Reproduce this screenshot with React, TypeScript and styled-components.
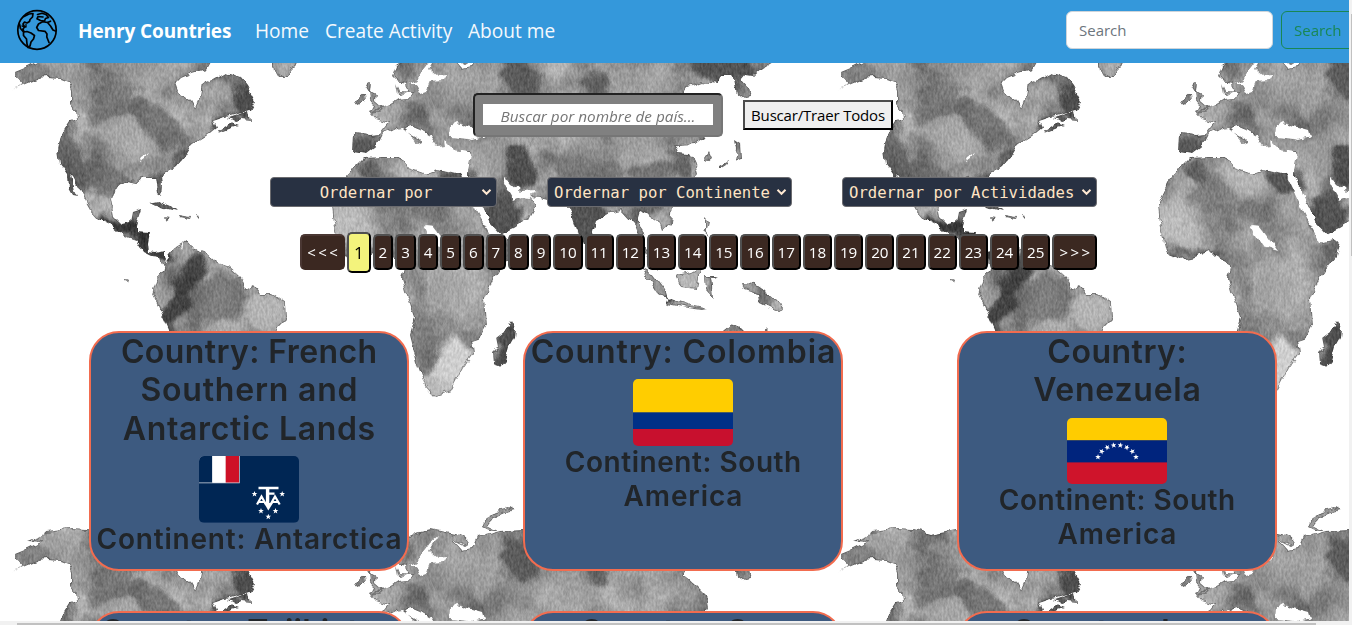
import React from "react";
import styled, { createGlobalStyle } from "styled-components";

const GlobalStyle = createGlobalStyle`
  *, *::before, *::after { box-sizing: border-box; }
  body { margin: 0; background: #fff; color: #212529; overflow: hidden;
    font-family: "Open Sans", "Noto Sans", sans-serif; font-size: 16px; }
`;

const Shell = styled.div`
  display: grid;
  grid-template-columns: 1349px 3px;
  grid-template-rows: 621px 4px;
  width: 1352px;
  height: 625px;
`;
const Viewport = styled.div`
  position: relative;
  overflow: hidden;
`;
const VTrack = styled.div`
  background: #f1f1f1;
  padding: 14px 0 0 2px;
`;
const VThumb = styled.div`
  height: 242px;
  background: #c1c1c1;
`;
const HTrack = styled.div`
  grid-column: 1 / 3;
  background: #f1f1f1;
  padding: 2px 0 0 17px;
`;
const HThumb = styled.div`
  width: 1299px;
  height: 2px;
  background: #c1c1c1;
`;
const MapLayer = styled.svg`
  position: absolute;
  inset: 0;
  display: block;
`;
const Page = styled.div`
  position: relative;
  display: flex;
  flex-direction: column;
`;

const Navbar = styled.nav`
  display: flex;
  align-items: center;
  height: 63px;
  padding: 0 0 3px 16px;
  background: #3498db;
  white-space: nowrap;
`;
const Brand = styled.a`
  width: 153px;
  margin: 2px 24px 0 20px;
  color: #fff;
  font-size: 19px;
  font-weight: 700;
  letter-spacing: -0.1px;
`;
const NavItem = styled.a<{ $w: number }>`
  width: ${(p) => p.$w}px;
  margin: 2px 16px 0 0;
  color: #f4f9fd;
  font-size: 19.1px;
`;
const NavForm = styled.form`
  display: flex;
  flex: none;
  gap: 8px;
  margin-left: auto;
  margin-right: -16px;
`;
const NavInput = styled.input`
  width: 207px;
  height: 38px;
  padding: 0 12px;
  border: 1px solid #ced4da;
  border-radius: 6px;
  background: #fff;
  font: 15px "Open Sans", sans-serif;
  &::placeholder { color: #6c757d; opacity: 1; }
`;
const NavButton = styled.button`
  width: 84px;
  height: 38px;
  padding: 0 0 0 12px;
  border: 1px solid #198754;
  border-radius: 6px;
  background: transparent;
  color: #198754;
  text-align: left;
  font: 15px "Open Sans", sans-serif;
`;

const SearchRow = styled.div`
  display: flex;
  align-items: center;
  gap: 20px;
  height: 44px;
  margin: 30px 0 0 473px;
`;
const SearchFrame = styled.div`
  width: 250px;
  height: 44px;
  padding: 9px 8px;
  border: 2px solid #767676;
  border-top-color: #222;
  border-left-color: #222;
  border-radius: 5px;
  background: #808080;
`;
const SearchInput = styled.input`
  display: block;
  width: 230px;
  height: 21px;
  padding: 2px 0 0;
  border: 0;
  background: #fff;
  text-align: center;
  font: italic 15.3px/19px "Open Sans", sans-serif;
  &::placeholder { color: #757575; opacity: 1; }
`;
const SearchButton = styled.button`
  width: 150px;
  height: 30px;
  padding: 0;
  border: 2px solid #000;
  border-top-color: #4c4c4c;
  border-left-color: #4c4c4c;
  background: #efefef;
  color: #000;
  white-space: nowrap;
  font: 15px "Open Sans", sans-serif;
  letter-spacing: -0.18px;
`;

const FilterRow = styled.div`
  display: flex;
  gap: 50px;
  margin: 40px 0 0 270px;
`;
const Filter = styled.button<{ $w: number; $center?: boolean }>`
  display: flex;
  align-items: center;
  width: ${(p) => p.$w}px;
  height: 30px;
  padding: 0 4px 0 ${(p) => (p.$center ? 0 : 6)}px;
  border: 1px solid #6b6b6f;
  border-radius: 4px;
  background: #283142;
  color: #ffe4c4;
  white-space: nowrap;
  font: 15.6px "DejaVu Sans Mono", monospace;
  span { flex: 1; padding-top: 1px; text-align: ${(p) => (p.$center ? "center" : "left")}; }
  svg { flex: none; }
`;

const Pager = styled.div`
  display: flex;
  align-items: flex-start;
  gap: 2px;
  height: 41px;
  margin: 25px 0 0 300px;
`;
const PageButton = styled.button<{ $w: number; $active?: boolean; $flat?: boolean }>`
  flex: none;
  width: ${(p) => p.$w}px;
  height: ${(p) => (p.$active ? 41 : 36)}px;
  margin-top: ${(p) => (p.$active ? 0 : 2)}px;
  padding: 0;
  border: 2px solid #000;
  border-color: ${(p) => (p.$flat ? "#4a3733 #3b2821 #3b2821 #4a3733" : "#505050 #000 #000 #505050")};
  border-radius: 5px;
  background: ${(p) => (p.$active ? "#f3f37c" : "#3b2821")};
  color: ${(p) => (p.$active ? "#000" : "#fff")};
  text-align: center;
  font: ${(p) => (p.$active ? 17 : 15.2)}px "Open Sans", sans-serif;
`;
const EndLabel = styled.span`
  font-size: 15px;
  letter-spacing: 2.4px;
  margin-right: -2.4px;
`;

const Cards = styled.div`
  display: grid;
  grid-template-columns: repeat(3, 320px);
  column-gap: 114px;
  row-gap: 40px;
  margin: 58px 0 0 89px;
`;
const CardBox = styled.article`
  height: 240px;
  border: 2px solid #f26c4f;
  border-radius: 30px;
  background: #3d5a80;
  text-align: center;
  white-space: nowrap;
  font-family: Inter, sans-serif;
`;
const CardTitle = styled.h1`
  margin: 0 0 8px;
  font-size: 32px;
  font-weight: 600;
  line-height: 38.4px;
`;
const CardText = styled.h2`
  margin: 0;
  font-size: 28px;
  font-weight: 600;
  line-height: 33.6px;
`;
const Line = styled.span<{ $ls: number }>`
  display: block;
  letter-spacing: ${(p) => p.$ls}px;
  margin-right: ${(p) => -p.$ls}px;
`;
const Flag = styled.svg`
  display: block;
  width: 100px;
  height: 66.6px;
  margin: 0 auto;
  border-radius: 5px;
`;

const STAR = "M0-3L.75-1H2.85L1.2.3 1.8 2.45 0 1.2-1.8 2.45-1.2.3-2.85-1H-.75Z";

function Globe() {
  return (
    <svg width="42" height="42" viewBox="0 0 42 42" fill="none" stroke="#000" strokeWidth="1.7" strokeLinejoin="round" strokeLinecap="round">
      <ellipse cx="21" cy="21" rx="19.2" ry="19.3" />
      <path d="M8 7.5 13 5 17 4.5 16.5 8 14 10.5 13.5 12.5 11 14 8.5 13 7 15 8.5 18 7 20 8 23 11 22.5 15 24 18.5 26.5 17.5 30 15 33 14 37 12 38.5 11 35 10.5 30 7.5 26.5 7.5 23 4.5 19.5 3.5 15" />
      <path d="M10 15.5V18L6 17" strokeWidth="1.3" />
      <path d="M21.5 5.5 26 4.2 30 5.5 32.5 8.5 29.5 9.5 28.5 12 24.5 11.5 21 9.8 22 7.5 27 8" />
      <path d="M34.5 12.2 31.5 13.5 26.5 12.7 22.5 15 20.7 18.5 22.5 21.5 29 22.3 31 25 30.8 28 33 33.5 M31.5 13.5 34.5 17 37 21 39.5 22" />
    </svg>
  );
}

const Chevron = () => (
  <svg width="11" height="8" viewBox="0 0 11 8" fill="none" stroke="#ffe9d2" strokeWidth="2">
    <path d="M1.5 1.8 5.5 5.8 9.5 1.8" />
  </svg>
);

function FrenchSouthernFlag() {
  return (
    <Flag viewBox="0 0 100 66.6">
      <rect width="100" height="66.6" fill="#002654" />
      <path d="M0 0H40.7V27.3H0Z" fill="#d9dde4" />
      <path d="M0 0H13.3V26.5H0Z" fill="#002654" />
      <path d="M13.3 0H26.7V26.5H13.3Z" fill="#fff" />
      <path d="M26.7 0H40V26.5H26.7Z" fill="#ce1126" />
      <g fill="none" stroke="#fff" strokeWidth="2">
        <path d="M59.5 32H79.5" strokeWidth="2.6" />
        <path d="M68.6 32V50" strokeWidth="3.4" />
        <path d="M70 37.6H75.5" strokeWidth="2.2" />
        <path d="M58 48.5 62.5 40.5 67 48.5M60 46H66M71.5 48.5 76 40.5 80.7 48.5M73 46H79" strokeWidth="2.2" />
      </g>
      <path d="M65 47H74L69.3 54.5Z" fill="#fff" />
      {[[55.5, 38], [83.2, 38], [62, 55], [76.5, 55], [69.3, 60.7]].map(([x, y]) => (
        <path key={x} d={STAR} transform={`translate(${x} ${y})`} fill="#fff" />
      ))}
    </Flag>
  );
}
function ColombiaFlag() {
  return (
    <Flag viewBox="0 0 100 66.6">
      <rect width="100" height="34" fill="#ffcd00" />
      <rect y="33.3" width="100" height="17" fill="#003087" />
      <rect y="50" width="100" height="17" fill="#c8102e" />
    </Flag>
  );
}
function VenezuelaFlag() {
  const stars = [[31, 39], [34.7, 33.5], [40.2, 29.4], [46.6, 27.3], [53.4, 27.3], [59.8, 29.4], [65.3, 33.5], [69, 39]];
  return (
    <Flag viewBox="0 0 100 66.6">
      <rect width="100" height="23" fill="#ffcc00" />
      <rect y="22.2" width="100" height="23" fill="#00247d" />
      <rect y="44.4" width="100" height="23" fill="#cf142b" />
      {stars.map(([x, y], i) => (
        <path key={i} d={STAR} transform={`translate(${x} ${y}) rotate(${(i - 3.5) * 20})`} fill="#fff" />
      ))}
    </Flag>
  );
}

const LANDS = [
  // North and Central America
  "M12 90 24 84 15 78 15 72 27 67 41 60 28 59 44 53 46 49 70 46 88 47 104 52 130 47 160 50 195 40 215 55 207 69 193 73 181 78 175 84 178 92 190 100 195 107 200 95 202 84 213 80 227 72 240 77 247 86 255 101 250 110 238 114 222 118 213 121 216 128 205 137 200 140 190 147 184 157 178 165 162 176 163 186 162 196 157 192 155 178 142 178 136 183 125 181 115 188 111 200 114 216 122 224 130 222 132 212 141 209 136 225 136 231 149 232 147 243 148 252 156 253 164 251 164 257 153 256 143 251 136 240 124 236 112 226 98 219 90 210 86 203 80 190 73 177 71 175 74 190 77 196 72 195 68 188 67 174 60 164 58 150 61 135 70 121 77 119 76 111 71 104 71 90 68 82 60 79 48 78 38 79Z",
  "M240 114 249 111 251 121 242 120 235 122 228 118Z",
  "M218 131 231 123 239 126 229 129 219 133Z",
  "M149 203 159 201 171 206 176 211 164 208Z M179 214 191 216 190 219 180 217Z M195 216 199 217 197 219Z M164 217 169 218 166 220Z",
  "M124 280 129 281 128 284 124 282Z",
  // Greenland
  "M273 63 272 40 299 40 297 64 291 70 288 76 278 76 274 69Z",
  // South America
  "M157 253 166 258 164 263 176 247 186 241 192 248 206 253 217 263 229 267 240 277 246 290 254 285 261 293 272 293 286 303 287 318 277 328 274 345 250 358 238 380 215 408 198 450 185 455 178 424 174 375 169 330 158 305 152 293 157 278 164 270Z",
  // Britain, Ireland
  "M365 85 371 82 370 91 376 94 375 100 383 107 380 111 370 112 374 104 370 99 369 92Z M356 100 364 94 365 103 358 106Z",
  // Europe, Asia
  "M355 133 370 135 380 134 389 123 376 119 371 113 377 109 390 104 398 99 408 98 411 92 400 91 397 84 399 95 407 91 406 83 396 81 392 77 396 66 407 59 415 51 432 47 455 52 468 58 466 64 454 58 463 68 472 66 477 55 500 49 525 48 560 45 620 44 690 47 755 51 782 57 763 68 754 76 747 75 742 81 750 90 752 98 745 99 738 94 735 79 732 75 721 75 717 84 702 82 688 87 684 93 693 100 706 113 708 125 703 138 695 144 676 145 679 153 689 154 694 162 697 173 690 183 681 190 671 191 673 205 671 224 662 231 659 222 647 214 640 211 637 221 645 232 642 242 650 255 658 271 649 264 642 248 633 223 621 210 611 212 596 221 591 238 585 245 579 236 570 208 556 202 541 198 530 197 536 206 529 219 513 229 500 235 494 232 484 208 473 188 468 171 470 153 456 153 446 147 437 148 426 134 420 130 410 126 405 131 422 141 411 146 406 135 395 128 383 134 378 144 366 153 354 151Z",
  "M482 44 485 36 497 29 509 26 514 29 502 32 492 37 488 43 498 48 490 48Z",
  // Africa
  "M334 223 332 204 343 181 352 170 364 158 383 157 400 157 408 168 427 174 438 170 460 174 474 200 489 231 498 243 514 239 510 257 494 277 485 298 487 325 480 338 471 341 473 354 463 368 451 391 434 396 425 386 417 363 410 335 415 318 406 292 402 278 405 266 389 257 383 251 370 257 355 260 342 255Z",
  // Madagascar
  "M510 321 514 329 513 339 509 346 505 360 500 366 494 364 493 353 498 348 496 338 504 332Z",
  // East and south-east Asian islands
  "M705 157 709 151 712 158 706 163Z M734 139 740 143 741 159 734 162 736 150Z M720 168 720 165 729 160 728 163Z M704 218 708 222 706 230 711 237 704 231Z M708 243 714 247 710 251Z",
  "M642 268 652 273 665 290 668 300 658 294 649 280Z M664 301 672 299 693 306 707 309 702 310 688 308 667 304Z M676 275 690 272 703 265 698 279 696 289 681 287Z M705 276 718 276 711 279 712 286 713 298 706 290Z M742 283 755 284 767 292 776 300 785 311 779 313 768 308 758 303 757 293 744 289Z",
  "M717 336 730 325 739 327 745 333 745 345 712 346Z M761 333 765 327 771 333Z",
];

const SEAS = [
  "M450 126 457 122 468 126 482 130 484 137 474 140 460 138 449 137Z",
  "M362 157 376 152 383 140 395 130 404 129 415 139 421 148 426 143 413 133 411 126 430 136 437 147 445 146 444 139 455 150 466 152 471 155 468 170 457 174 437 170 426 174 407 166 401 157Z",
  "M461 177 475 187 489 221 507 240 514 233 535 217 535 225 515 240 494 242 480 216Z",
  "M424 226 434 227 452 251 437 246Z",
  "M504 178 511 182 521 191 536 190 530 199 519 197 513 200 506 188Z",
  "M140 158 149 153 145 158 141 161Z",
  "M430 61 437 55 429 69 437 76 447 75 444 80 430 81 426 91 420 93 416 84 410 84 418 78Z",
  "M181 247 184 239 182 249Z",
];

type Blot = [number, number, number, number, number, string, number];
const BLOTS: Blot[] = [
  [68, 160, 15, 40, -10, "#3d3d3d", 0.65], [115, 100, 20, 35, 35, "#494949", 0.45], [105, 60, 24, 18, 0, "#505050", 0.5],
  [160, 125, 34, 14, 35, "#444", 0.6], [104, 180, 28, 16, 10, "#555", 0.65], [88, 198, 12, 8, 0, "#ccc", 0.7],
  [128, 136, 34, 16, 20, "#bdbdbd", 0.6], [75, 80, 20, 16, 0, "#b0b0b0", 0.5], [218, 92, 14, 14, 0, "#c0c0c0", 0.6],
  [135, 72, 40, 12, 10, "#a8a8a8", 0.5], [245, 98, 15, 16, 10, "#303030", 0.85], [228, 123, 17, 9, 0, "#333", 0.75],
  [184, 158, 12, 7, -50, "#333", 0.6], [160, 187, 5, 14, 0, "#333", 0.8], [128, 229, 26, 9, 20, "#202020", 0.95],
  [150, 248, 24, 12, 30, "#202020", 0.95], [160, 205, 30, 7, 0, "#4a4a4a", 0.8],
  [182, 292, 11, 48, 25, "#262626", 0.85], [218, 298, 26, 26, 0, "#5a5a5a", 0.6], [266, 315, 24, 20, 0, "#c0c0c0", 0.8],
  [170, 325, 12, 32, 0, "#383838", 0.75], [362, 143, 15, 12, 0, "#343434", 0.75], [413, 109, 13, 9, 0, "#505050", 0.65],
  [403, 70, 13, 13, 0, "#575757", 0.6], [440, 90, 16, 36, 0, "#999", 0.5], [475, 124, 16, 10, 30, "#4a4a4a", 0.5],
  [440, 125, 12, 20, 0, "#b0b0b0", 0.6], [460, 150, 20, 12, 0, "#a9a9a9", 0.6],
  [520, 75, 22, 18, 15, "#3c3c3c", 0.7], [595, 87, 18, 10, 10, "#3f3f3f", 0.7], [485, 75, 14, 40, 10, "#aaa", 0.45],
  [500, 215, 20, 22, 0, "#333", 0.85], [505, 195, 12, 22, 10, "#555", 0.5], [492, 155, 14, 16, 0, "#9c9c9c", 0.6],
  [521, 169, 15, 24, 5, "#303030", 0.85], [585, 225, 18, 32, 0, "#383838", 0.85], [585, 165, 40, 16, 15, "#606060", 0.6],
  [610, 150, 60, 12, 5, "#aaa", 0.5], [650, 170, 24, 12, -10, "#555", 0.65], [682, 165, 18, 12, 50, "#4a4a4a", 0.75],
  [725, 70, 35, 14, 10, "#383838", 0.8], [645, 80, 34, 16, -10, "#b5b5b5", 0.6], [648, 212, 17, 12, 0, "#484848", 0.75],
  [658, 222, 12, 10, 0, "#c0c0c0", 0.6], [368, 173, 14, 8, -10, "#3d3d3d", 0.75], [388, 195, 24, 18, 20, "#6a6a6a", 0.5],
  [458, 182, 24, 11, 15, "#303030", 0.8], [353, 225, 20, 24, 0, "#cfcfcf", 0.6], [365, 235, 28, 12, 20, "#c5c5c5", 0.5],
  [370, 254, 32, 5, 0, "#3b3b3b", 0.6], [426, 212, 14, 12, -20, "#606060", 0.5], [507, 250, 8, 16, 25, "#404040", 0.65],
  [422, 340, 11, 38, -5, "#646464", 0.55], [455, 285, 30, 28, 0, "#c2c2c2", 0.55], [452, 360, 18, 26, 30, "#ececec", 0.85],
  [474, 335, 10, 14, 20, "#666", 0.6], [434, 388, 18, 12, 0, "#ccc", 0.8], [505, 340, 13, 26, 10, "#333", 0.85],
  [670, 303, 10, 5, 0, "#222", 0.85], [690, 280, 16, 12, 0, "#ccc", 0.7], [654, 284, 14, 16, 0, "#aaa", 0.6],
  [766, 299, 11, 10, 10, "#454545", 0.6], [28, 70, 20, 12, -20, "#626262", 0.5], [65, 55, 26, 12, 0, "#bbb", 0.35],
];

function WorldMap() {
  return (
    <MapLayer width="1349" height="621" viewBox="0 0 1349 621">
      <defs>
        <filter id="edge" x="0" y="0" width="826" height="482" filterUnits="userSpaceOnUse">
          <feTurbulence type="fractalNoise" baseFrequency="0.1" numOctaves="2" seed="4" result="n" />
          <feDisplacementMap in="SourceGraphic" in2="n" scale="8" xChannelSelector="R" yChannelSelector="G" />
        </filter>
        <filter id="soft" x="-30%" y="-30%" width="160%" height="160%">
          <feGaussianBlur stdDeviation="2.6" />
        </filter>
        <filter id="wash" x="0" y="0" width="826" height="482" filterUnits="userSpaceOnUse" colorInterpolationFilters="sRGB">
          <feTurbulence type="fractalNoise" baseFrequency="0.024 0.02" numOctaves="4" seed="8" />
          <feColorMatrix values="1.8 0 0 0 -.3 1.8 0 0 0 -.3 1.8 0 0 0 -.3 0 0 0 0 1" />
        </filter>
        <filter id="warp" x="0" y="0" width="826" height="482" filterUnits="userSpaceOnUse">
          <feTurbulence type="fractalNoise" baseFrequency="0.035" numOctaves="3" seed="12" result="n" />
          <feDisplacementMap in="SourceGraphic" in2="n" scale="26" xChannelSelector="R" yChannelSelector="G" />
        </filter>
        <filter id="grain" x="0" y="0" width="826" height="482" filterUnits="userSpaceOnUse" colorInterpolationFilters="sRGB">
          <feTurbulence type="fractalNoise" baseFrequency="0.5 0.22" numOctaves="2" seed="3" />
          <feColorMatrix values="1.3 0 0 0 -.12 1.3 0 0 0 -.12 1.3 0 0 0 -.12 0 0 0 0 1" />
        </filter>
        <mask id="land" maskUnits="userSpaceOnUse" x="0" y="0" width="826" height="482">
          <g filter="url(#edge)">
            {LANDS.map((d, i) => <path key={i} d={d} fill="#fff" />)}
            {SEAS.map((d, i) => <path key={i} d={d} fill="#000" />)}
          </g>
        </mask>
        <g id="tile">
          <g mask="url(#land)">
            <rect width="826" height="482" fill="#9c9c9c" />
            <rect width="826" height="482" filter="url(#wash)" opacity=".36" />
            <g filter="url(#warp)">
              {BLOTS.map(([x, y, rx, ry, r, fill, o], i) => (
                <ellipse key={i} cx={x} cy={y} rx={rx} ry={ry} transform={`rotate(${r} ${x} ${y})`} fill={fill} opacity={o} filter="url(#soft)" />
              ))}
            </g>
            <rect width="826" height="482" filter="url(#grain)" opacity=".17" />
            <g filter="url(#edge)" fill="none" stroke="#3c3c3c" strokeWidth="1.8" opacity=".5">
              {LANDS.map((d, i) => <path key={i} d={d} />)}
            </g>
          </g>
        </g>
      </defs>
      <use href="#tile" />
      <use href="#tile" x="826" />
      <use href="#tile" y="482" />
      <use href="#tile" x="826" y="482" />
    </MapLayer>
  );
}

type Row = [string, number];
interface Country { title: Row[]; flag: React.ReactNode; continent: Row[] }
const COUNTRIES: Country[] = [
  { title: [["Country: French", 0.4], ["Southern and", 0.8], ["Antarctic Lands", 0.65]], flag: <FrenchSouthernFlag />, continent: [["Continent: Antarctica", 0.8]] },
  { title: [["Country: Colombia", 0.9]], flag: <ColombiaFlag />, continent: [["Continent: South", 0.55], ["America", 0.9]] },
  { title: [["Country:", 0.5], ["Venezuela", 0.75]], flag: <VenezuelaFlag />, continent: [["Continent: South", 0.55], ["America", 0.9]] },
  { title: [["Country: Tajikistan", 0.3]], flag: null, continent: [] },
  { title: [["Country: San", 0.4], ["Marino", 0.4]], flag: null, continent: [] },
  { title: [["Country: Iran", 0.6]], flag: null, continent: [] },
];

const Lines = ({ rows }: { rows: Row[] }) => (
  <>{rows.map(([text, ls]) => <Line key={text} $ls={ls}>{text}</Line>)}</>
);

export default function App() {
  return (
    <Shell>
      <GlobalStyle />
      <Viewport>
        <WorldMap />
        <Page>
          <Navbar>
            <Globe />
            <Brand>Henry Countries</Brand>
            <NavItem $w={54}>Home</NavItem>
            <NavItem $w={127}>Create Activity</NavItem>
            <NavItem $w={90}>About me</NavItem>
            <NavForm>
              <NavInput placeholder="Search" />
              <NavButton type="button">Search</NavButton>
            </NavForm>
          </Navbar>
          <SearchRow>
            <SearchFrame><SearchInput placeholder="Buscar por nombre de país..." /></SearchFrame>
            <SearchButton>Buscar/Traer Todos</SearchButton>
          </SearchRow>
          <FilterRow>
            <Filter $w={227} $center><span>Ordernar por</span><Chevron /></Filter>
            <Filter $w={245}><span>Ordernar por Continente</span><Chevron /></Filter>
            <Filter $w={255}><span>Ordernar por Actividades</span><Chevron /></Filter>
          </FilterRow>
          <Pager>
            <PageButton $w={45} $flat><EndLabel>&lt;&lt;&lt;</EndLabel></PageButton>
            {Array.from({ length: 25 }, (_, i) => (
              <PageButton key={i} $active={i === 0} $w={i === 0 ? 23.6 : i < 9 ? 20.6 : 29.2}>{i + 1}</PageButton>
            ))}
            <PageButton $w={45}><EndLabel>&gt;&gt;&gt;</EndLabel></PageButton>
          </Pager>
          <Cards>
            {COUNTRIES.map((c, i) => (
              <CardBox key={i}>
                <CardTitle><Lines rows={c.title} /></CardTitle>
                {c.flag}
                <CardText><Lines rows={c.continent} /></CardText>
              </CardBox>
            ))}
          </Cards>
        </Page>
      </Viewport>
      <VTrack><VThumb /></VTrack>
      <HTrack><HThumb /></HTrack>
    </Shell>
  );
}
